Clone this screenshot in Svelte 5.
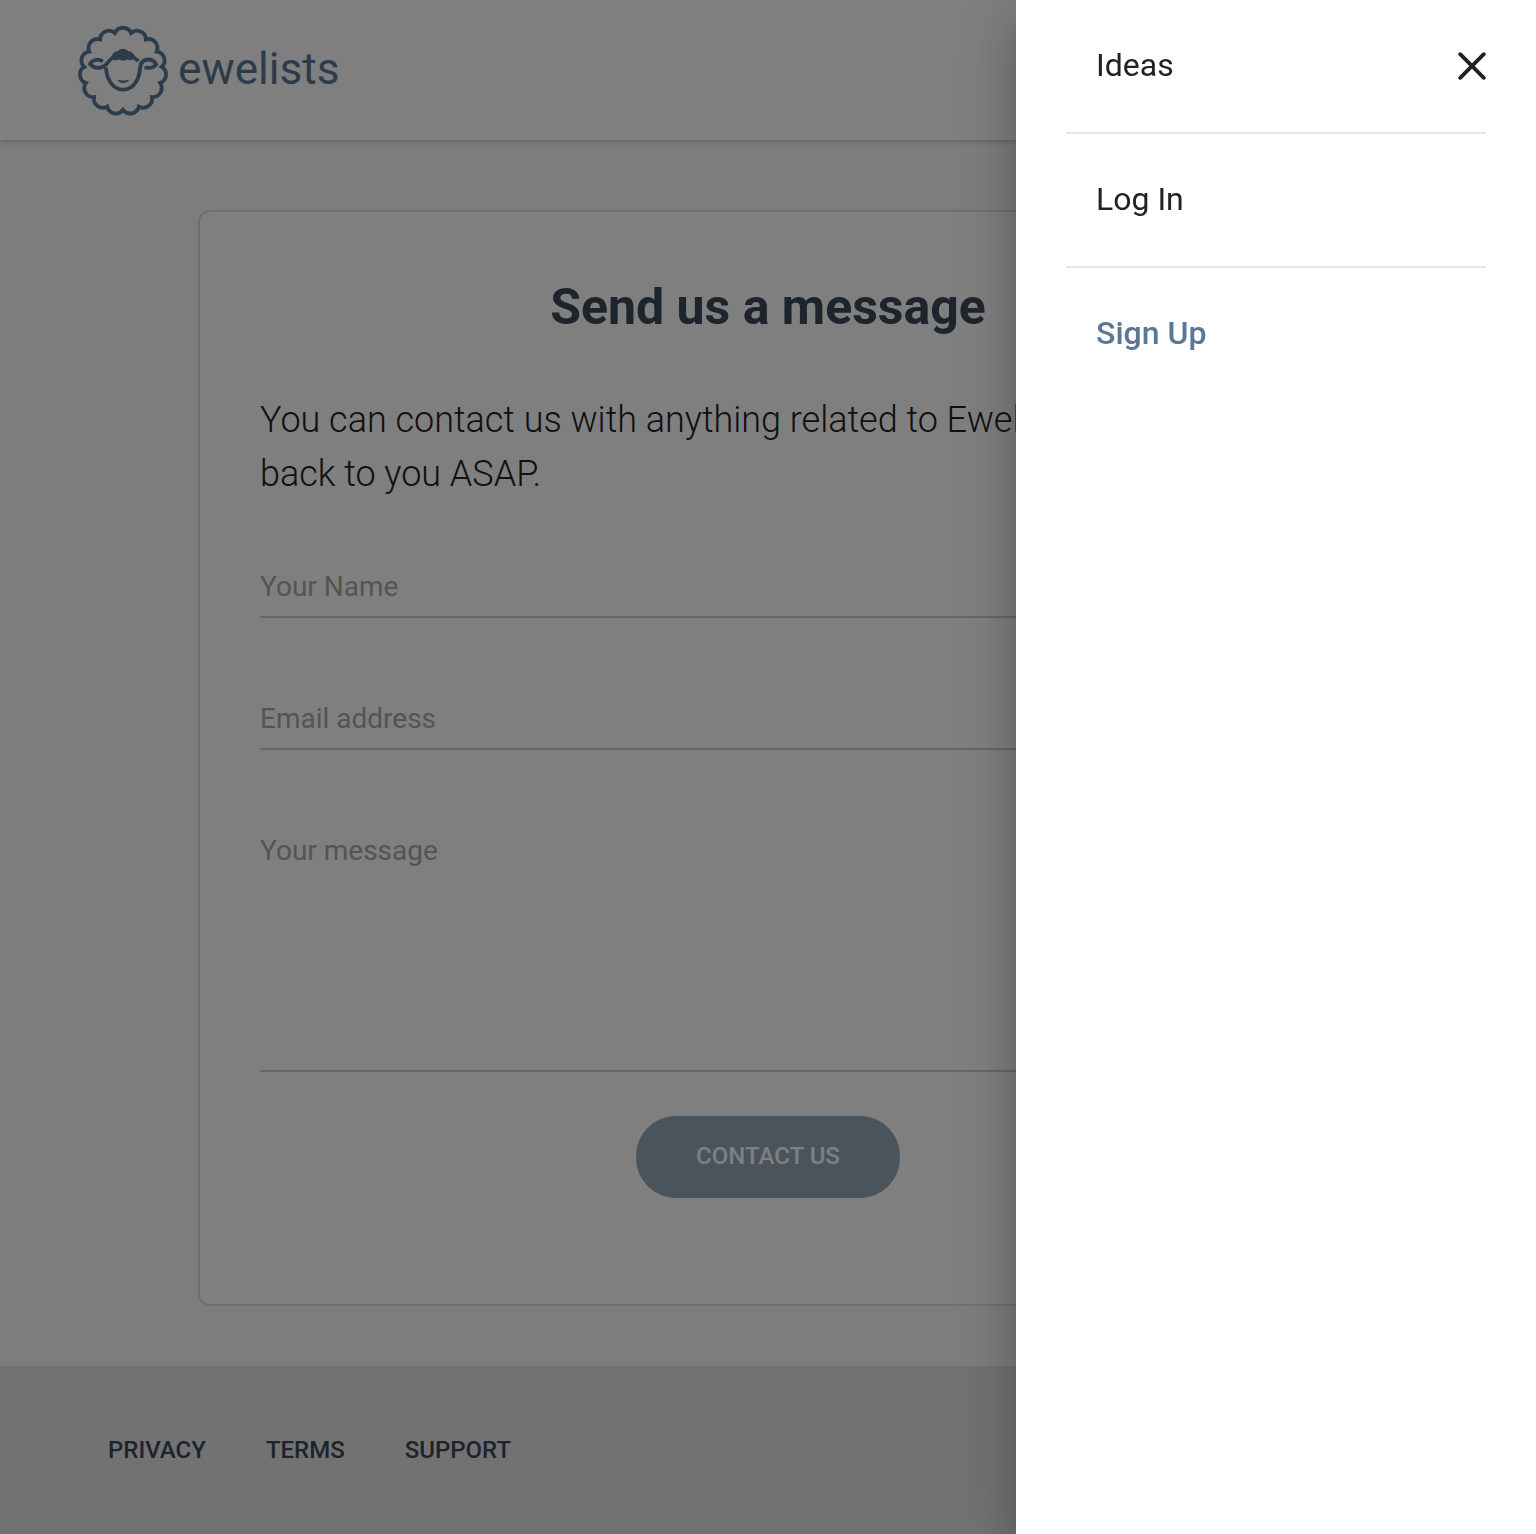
<script>
  const drawerLinks = [
    { label: 'Ideas' },
    { label: 'Log In' },
    { label: 'Sign Up', primary: true }
  ];
  const footerLinks = ['PRIVACY', 'TERMS', 'SUPPORT'];

  // Scalloped fleece outline: equal arcs between points on a circle.
  const lobes = 15;
  const point = (i) => {
    const a = (-90 + 360 / lobes / 2 + (360 / lobes) * i) * (Math.PI / 180);
    return `${(45 + 38.9 * Math.cos(a)).toFixed(2)} ${(45 + 38.9 * Math.sin(a)).toFixed(2)}`;
  };
  let fleece = `M${point(0)}`;
  for (let i = 1; i <= lobes; i++) fleece += `A8.9 8.9 0 0 1 ${point(i)}`;
  fleece += 'Z';
</script>

<div class="page">
  <header>
    <svg class="logo" width="90" height="90" viewBox="0 0 90 90" fill="none" stroke="currentColor" stroke-width="3.8">
      <path d={fleece} />
      <path d="M28 41.500C28.200 47.500 29.500 52 32.300 56C35.500 61 39.500 63.700 45 63.700S54.800 61 58 56C61.300 51 61.600 47.500 62 42.200C62.300 36.500 65.500 33.500 70.500 33.500C75 33.700 77 36 78.200 38.300C75.500 41.800 71.500 42.500 66.500 41.500" />
      <path d="M25 35.300C20 32.500 14.500 33.700 12 38C16.500 43.200 23.500 43.200 28 38.500C31.500 34.500 33.500 32 37 29.500M53 29.500L60.600 35" />
      <path class="solid" d="M34 30.500C34.200 27 37.200 24.800 39.800 25.300C42 22 48 22 50.200 25.300C53 24.800 55.800 27 56.800 31C55.300 34.500 51.500 34.800 49.500 33.500C47 35 43.500 35 41 33.500C38.500 34.800 35.200 34.500 34 32.500Z" />
      <path class="solid" d="M39.500 54C43 54.600 47.500 54.600 51 54C49 58 41.500 58 39.500 54Z" />
    </svg>
    <span class="brand">ewelists</span>
  </header>

  <main>
    <form class="card">
      <h1>Send us a message</h1>
      <p>You can contact us with anything related to Ewelists. We'll get back to you ASAP.</p>
      <div class="field">Your Name</div>
      <div class="field">Email address</div>
      <div class="field area">Your message</div>
      <button type="button">CONTACT US</button>
    </form>
  </main>

  <footer>
    {#each footerLinks as link}
      <a href="#top">{link}</a>
    {/each}
  </footer>
</div>

<div class="backdrop"></div>

<aside>
  <ul>
    {#each drawerLinks as link}
      <li class:primary={link.primary}>{link.label}</li>
    {/each}
  </ul>
  <svg class="close" width="28" height="28" viewBox="0 0 28 28" stroke="currentColor" stroke-width="3.800" stroke-linecap="round">
    <path d="M2.200 2.200L25.800 25.800M25.800 2.200L2.200 25.800" />
  </svg>
</aside>

<style>
  :global(body) {
    font-family: Roboto, sans-serif;
    overflow: hidden;
  }
  .page {
    height: 1534px;
    display: flex;
    flex-direction: column;
    background: #fbfbfb;
  }
  header {
    height: 140px;
    box-sizing: border-box;
    padding: 26px 78px 0;
    display: flex;
    gap: 10px;
    align-items: flex-start;
    background: #fff;
    color: #5a7896;
    box-shadow: 0 2px 5px rgba(0, 0, 0, 0.2);
  }
  .logo {
    overflow: visible;
  }
  .solid {
    fill: currentColor;
    stroke: none;
  }
  .brand {
    font-size: 44.2px;
    line-height: 86px;
  }
  main {
    padding: 70px 198px 60px;
  }
  .card {
    height: 1096px;
    box-sizing: border-box;
    border: 2px solid #dfdfdf;
    border-radius: 12px;
    padding: 60px;
    background: #fff;
    display: flex;
    flex-direction: column;
  }
  h1 {
    margin: 0;
    text-align: center;
    font-size: 50px;
    line-height: 70px;
    font-weight: 700;
    color: #3b4959;
  }
  p {
    margin: 51px 0 0;
    font-size: 36px;
    line-height: 54px;
    font-weight: 300;
    letter-spacing: -0.015px;
    color: #222;
  }
  .field {
    height: 66px;
    box-sizing: border-box;
    margin-top: 51px;
    padding-top: 16px;
    border-bottom: 2px solid #cecece;
    font-size: 28px;
    line-height: 38px;
    color: #a8a8a8;
  }
  .field + .field {
    margin-top: 66px;
  }
  .area {
    height: 256px;
  }
  button {
    align-self: center;
    width: 264px;
    height: 82px;
    margin-top: 44px;
    padding: 0 0 3px;
    border: 0;
    border-radius: 40px;
    background: #94a8ba;
    color: #fff;
    font: 500 24px Roboto, sans-serif;
  }
  footer {
    flex: 1;
    padding: 0 108px;
    display: flex;
    gap: 60px;
    line-height: 168px;
    background: #e5e5e5;
  }
  footer a {
    color: #3b4959;
    font-size: 24px;
    font-weight: 500;
    text-decoration: none;
  }
  .backdrop {
    position: fixed;
    inset: 0;
    background: rgba(0, 0, 0, 0.5);
  }
  aside {
    position: fixed;
    inset: 0 0 0 auto;
    width: 520px;
    box-sizing: border-box;
    padding: 0 50px;
    background: #fff;
    color: #222;
    box-shadow:
      0 16px 20px -10px rgba(0, 0, 0, 0.2),
      0 32px 48px 4px rgba(0, 0, 0, 0.14),
      0 12px 60px 10px rgba(0, 0, 0, 0.12);
  }
  ul {
    margin: 0;
    padding: 0;
    list-style: none;
  }
  li {
    height: 134px;
    box-sizing: border-box;
    padding: 0 30px;
    border-bottom: 2px solid #e5e5e5;
    font-size: 32px;
    line-height: 130px;
  }
  .primary {
    border: 0;
    color: #5a7896;
    font-weight: 500;
  }
  .close {
    position: absolute;
    top: 52px;
    right: 50px;
  }
</style>
